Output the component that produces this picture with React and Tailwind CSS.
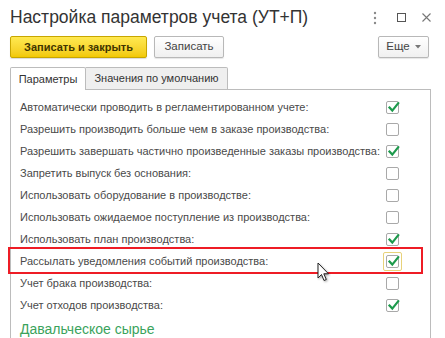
import React from "react";

const rows = [
  ["Автоматически проводить в регламентированном учете:", true],
  ["Разрешить производить больше чем в заказе производства:", false],
  ["Разрешить завершать частично произведенные заказы производства:", true],
  ["Запретить выпуск без основания:", false],
  ["Использовать оборудование в производстве:", false],
  ["Использовать ожидаемое поступление из производства:", false],
  ["Использовать план производства:", true],
  ["Рассылать уведомления событий производства:", true, true],
  ["Учет брака производства:", false],
  ["Учет отходов производства:", true],
];

function Check({ checked, focused }) {
  const box = (
    <div className="w-[13px] h-[13px] border border-[#a9a9a9] rounded-[2px] bg-white relative">
      {checked && (
        <svg viewBox="0 0 13 13" className="absolute left-[0px] top-[-1px] w-[13px] h-[13px]">
          <path d="M2.5 6.5 L5.3 9.6 L11.2 2.2" fill="none" stroke="#1d9a4c" strokeWidth="2.2" strokeLinecap="square" />
        </svg>
      )}
    </div>
  );
  if (focused)
    return (
      <div className="w-[19px] h-[19px] border border-[#e8d27a] rounded-[2px] flex items-center justify-center">
        {box}
      </div>
    );
  return box;
}

export default function App() {
  return (
    <div
      className="w-[445px] h-[338px] bg-white overflow-hidden relative text-[#404040]"
      style={{ fontFamily: '"Liberation Sans", Arial, sans-serif' }}
    >
      <div className="flex items-center h-[33px] pl-[10px] pr-[14px]">
        <div className="text-[17.5px] text-[#333] leading-none mt-[2px] flex-1">
          Настройка параметров учета (УТ+П)
        </div>
        <div className="flex items-center mt-[2px] text-[#777]">
          <svg width="4" height="14" viewBox="0 0 4 14">
            <circle cx="2" cy="2" r="1.2" fill="#8a8a8a" />
            <circle cx="2" cy="7" r="1.2" fill="#8a8a8a" />
            <circle cx="2" cy="12" r="1.2" fill="#8a8a8a" />
          </svg>
          <div className="ml-[20px] w-[9px] h-[9px] border border-[#555]" />
          <svg className="ml-[16px]" width="9" height="9" viewBox="0 0 9 9">
            <path d="M0.5 0.5 L8.5 8.5 M8.5 0.5 L0.5 8.5" stroke="#777" strokeWidth="1.1" />
          </svg>
        </div>
      </div>
      <div className="flex items-center pl-[10px] pr-[16px] mt-[3px]">
        <div className="w-[137px] h-[22px] rounded-[2px] border border-[#c7a600] bg-gradient-to-b from-[#ffe94f] to-[#f2c900] flex items-center justify-center text-[11px] text-[#3f3500] font-bold shadow-[0_1px_1px_rgba(0,0,0,0.15)]">
          Записать и закрыть
        </div>
        <div className="ml-[7px] w-[70px] h-[22px] rounded-[2px] border border-[#b8b8b8] bg-gradient-to-b from-white to-[#f0f0f0] flex items-center justify-center text-[11.5px] text-[#444] shadow-[0_1px_1px_rgba(0,0,0,0.1)]">
          Записать
        </div>
        <div className="flex-1" />
        <div className="w-[51px] h-[22px] rounded-[2px] border border-[#b8b8b8] bg-gradient-to-b from-white to-[#f0f0f0] flex items-center justify-center gap-[5px] text-[11.5px] text-[#444] shadow-[0_1px_1px_rgba(0,0,0,0.1)]">
          <span>Еще</span>
          <svg width="6" height="4" viewBox="0 0 6 4">
            <path d="M0 0 L6 0 L3 3.5 Z" fill="#777" />
          </svg>
        </div>
      </div>
      <div className="mt-[9px] pl-[10px] flex items-end">
        <div className="w-[76px] h-[23px] border border-b-0 border-[#bcbcbc] bg-white flex items-center justify-center text-[11px] text-[#333] relative z-10 rounded-t-[2px]">
          Параметры
        </div>
        <div className="w-[142px] h-[23px] border border-l-0 border-[#bcbcbc] bg-[#efefef] flex items-center justify-center text-[11px] text-[#333] rounded-tr-[2px]">
          Значения по умолчанию
        </div>
      </div>
      <div className="ml-[10px] w-[421px] h-[260px] border border-[#bcbcbc] border-b-0 mt-[-1px] pt-[6px] pl-[9px]">
        {rows.map(([label, checked, focused], i) => (
          <div key={i} className="h-[22px] flex items-center relative">
            <span className="text-[11px] text-[#4a4a4a] flex-1 whitespace-nowrap">{label}</span>
            <div className="w-[44px] flex justify-start">
              <div className={focused ? "ml-[-3px]" : ""}>
                <Check checked={checked} focused={focused} />
              </div>
            </div>
          </div>
        ))}
        <div className="text-[14px] text-[#3aa35c] mt-[3px] leading-[20px]">Давальческое сырье</div>
      </div>
      <div className="absolute left-[8px] top-[247px] w-[415px] h-[27px] border-2 border-[#ee1c25] pointer-events-none" />
      <svg className="absolute left-[317px] top-[262px]" width="14" height="22" viewBox="0 0 14 22">
        <path d="M1 1 L1 16 L4.5 12.5 L7 18.5 L9.3 17.5 L6.8 11.8 L11.5 11.8 Z" fill="white" stroke="#222" strokeWidth="1" strokeLinejoin="round" style={{ filter: "drop-shadow(1px 1px 1px rgba(0,0,0,0.35))" }} />
      </svg>
    </div>
  );
}
